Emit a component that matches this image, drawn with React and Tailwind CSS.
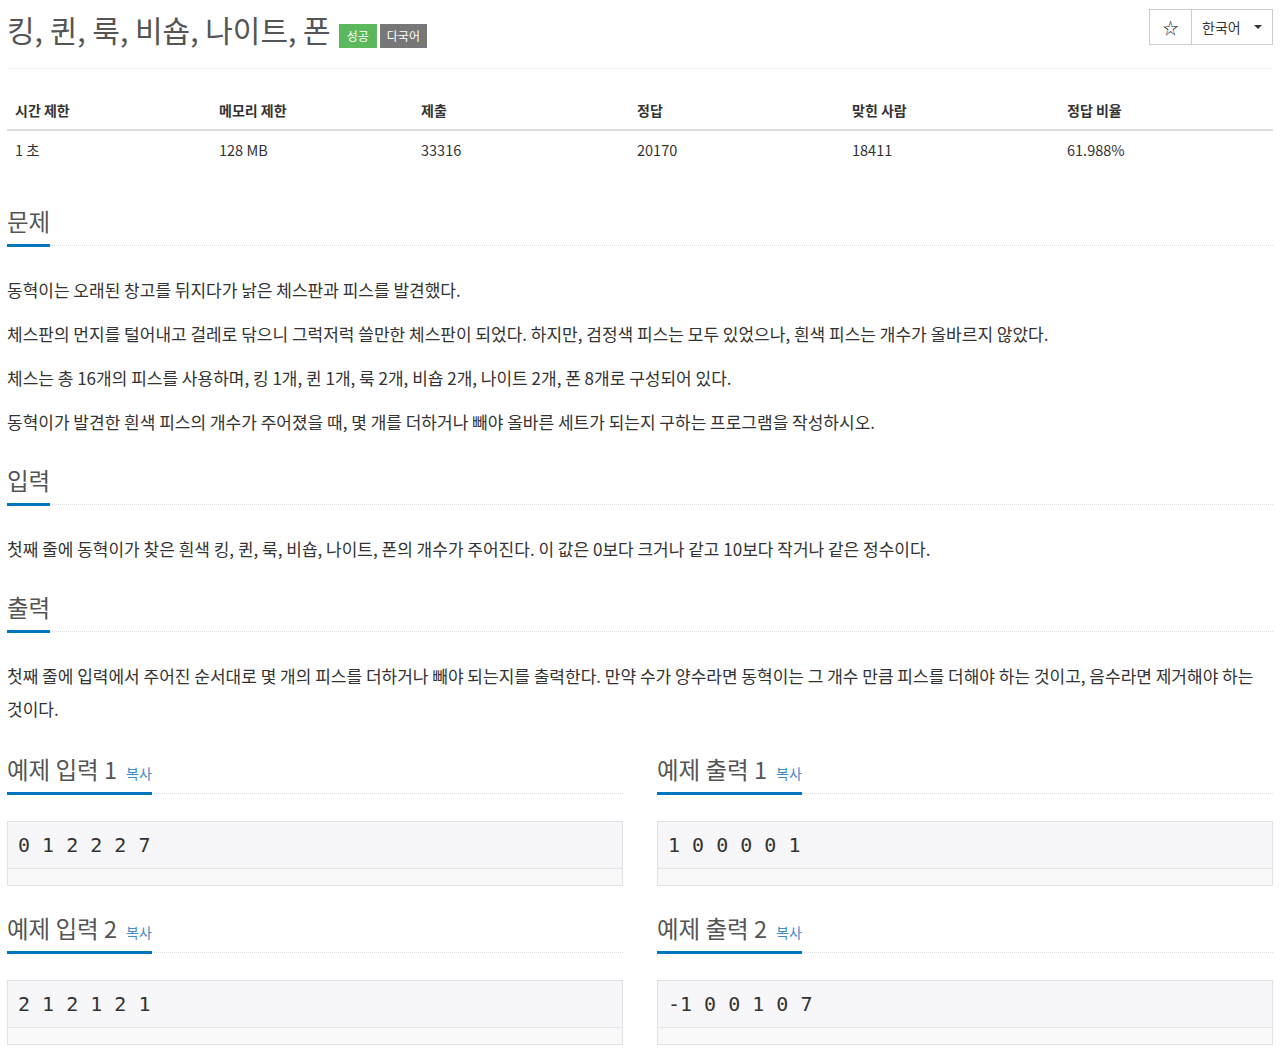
import React from 'react';

const KR = { fontFamily: '"Noto Sans CJK KR", "Noto Sans", sans-serif' };

const stats = [
  { label: '시간 제한', value: '1 초', w: 'w-[204px]' },
  { label: '메모리 제한', value: '128 MB', w: 'w-[202px]' },
  { label: '제출', value: '33316', w: 'w-[216px]' },
  { label: '정답', value: '20170', w: 'w-[215px]' },
  { label: '맞힌 사람', value: '18411', w: 'w-[215px]' },
  { label: '정답 비율', value: '61.988%', w: 'w-[214px]' },
];

const Heading = ({ children, copy, className = '' }) => (
  <div className={`flex items-end border-b border-dotted border-[#ddd] mb-[27px] ${className}`}>
    <h2 className="text-[23.5px] leading-[26px] text-[#555] pb-[10px] border-b-[3px] border-[#0076c0] -mb-[2px] flex items-baseline">
      {children}
      {copy && <span className="ml-[9px] text-[14px] leading-none text-[#428bca]">복사</span>}
    </h2>
  </div>
);

const P = ({ children }) => (
  <p className="text-[17px] leading-[33px] text-[#333] mb-[11px] break-keep">{children}</p>
);

const Sample = ({ title, data, className = '' }) => (
  <div className={className}>
    <Heading copy>{title}</Heading>
    <div className="border border-[#e1e1e8] bg-[#f7f7f9]">
      <pre
        className="px-[10px] pt-[10px] pb-[10px] text-[20px] leading-[26px] text-[#333]"
        style={{ fontFamily: '"DejaVu Sans Mono", "Liberation Mono", monospace' }}
      >
        {data}
      </pre>
      <div className="h-[17px] border-t border-[#e5e5e5] bg-[#f9f9fa]"></div>
    </div>
  </div>
);

export default function App() {
  return (
    <div className="px-[7px] bg-white min-h-[1052px]" style={KR}>
      {/* title row */}
      <div className="flex justify-between items-start pb-[20px] border-b border-[#eee]">
        <h1 className="pt-[10px] flex items-center text-[30px] leading-[36px] text-[#555]">
          킹, 퀸, 룩, 비숍, 나이트, 폰
          <span className="ml-[8px] mt-[14px] bg-[#5cb85c] text-white text-[12px] leading-[24px] px-[8px]">성공</span>
          <span className="ml-[3px] mt-[14px] bg-[#777] text-white text-[12px] leading-[24px] px-[7px]">다국어</span>
        </h1>
        <div className="mt-[9px] flex border border-[#ccc] h-[36px] text-[#333]">
          <button className="w-[42px] flex items-center justify-center border-r border-[#ccc] text-[16px]">☆</button>
          <button className="w-[80px] flex items-center pl-[10px] text-[14px]">
            한국어
            <span className="ml-auto mr-[10px] w-0 h-0 border-l-[4px] border-r-[4px] border-t-[4px] border-l-transparent border-r-transparent border-t-[#333]"></span>
          </button>
        </div>
      </div>

      {/* stats table */}
      <table className="mt-[22px] w-full border-collapse text-[#333]">
        <thead>
          <tr className="border-b-2 border-[#ddd]">
            {stats.map((s) => (
              <th key={s.label} className={`${s.w} text-left font-bold text-[14px] leading-[22px] px-[8px] py-[8px]`}>
                {s.label}
              </th>
            ))}
          </tr>
        </thead>
        <tbody>
          <tr>
            {stats.map((s) => (
              <td key={s.label} className="text-[14.5px] leading-[22px] px-[8px] py-[8px]">{s.value}</td>
            ))}
          </tr>
        </tbody>
      </table>

      <Heading className="mt-[39px]">문제</Heading>
      <P>동혁이는 오래된 창고를 뒤지다가 낡은 체스판과 피스를 발견했다.</P>
      <P>체스판의 먼지를 털어내고 걸레로 닦으니 그럭저럭 쓸만한 체스판이 되었다. 하지만, 검정색 피스는 모두 있었으나, 흰색 피스는 개수가 올바르지 않았다.</P>
      <P>체스는 총 16개의 피스를 사용하며, 킹 1개, 퀸 1개, 룩 2개, 비숍 2개, 나이트 2개, 폰 8개로 구성되어 있다.</P>
      <P>동혁이가 발견한 흰색 피스의 개수가 주어졌을 때, 몇 개를 더하거나 빼야 올바른 세트가 되는지 구하는 프로그램을 작성하시오.</P>

      <Heading className="mt-[29px]">입력</Heading>
      <P>첫째 줄에 동혁이가 찾은 흰색 킹, 퀸, 룩, 비숍, 나이트, 폰의 개수가 주어진다. 이 값은 0보다 크거나 같고 10보다 작거나 같은 정수이다.</P>

      <Heading className="mt-[29px]">출력</Heading>
      <P>첫째 줄에 입력에서 주어진 순서대로 몇 개의 피스를 더하거나 빼야 되는지를 출력한다. 만약 수가 양수라면 동혁이는 그 개수 만큼 피스를 더해야 하는 것이고, 음수라면 제거해야 하는 것이다.</P>

      <div className="mt-[31px] grid grid-cols-2 gap-x-[34px]">
        <Sample title="예제 입력 1" data="0 1 2 2 2 7" />
        <Sample title="예제 출력 1" data="1 0 0 0 0 1" />
        <Sample title="예제 입력 2" data="2 1 2 1 2 1" className="mt-[29px]" />
        <Sample title="예제 출력 2" data="-1 0 0 1 0 7" className="mt-[29px]" />
      </div>
    </div>
  );
}
